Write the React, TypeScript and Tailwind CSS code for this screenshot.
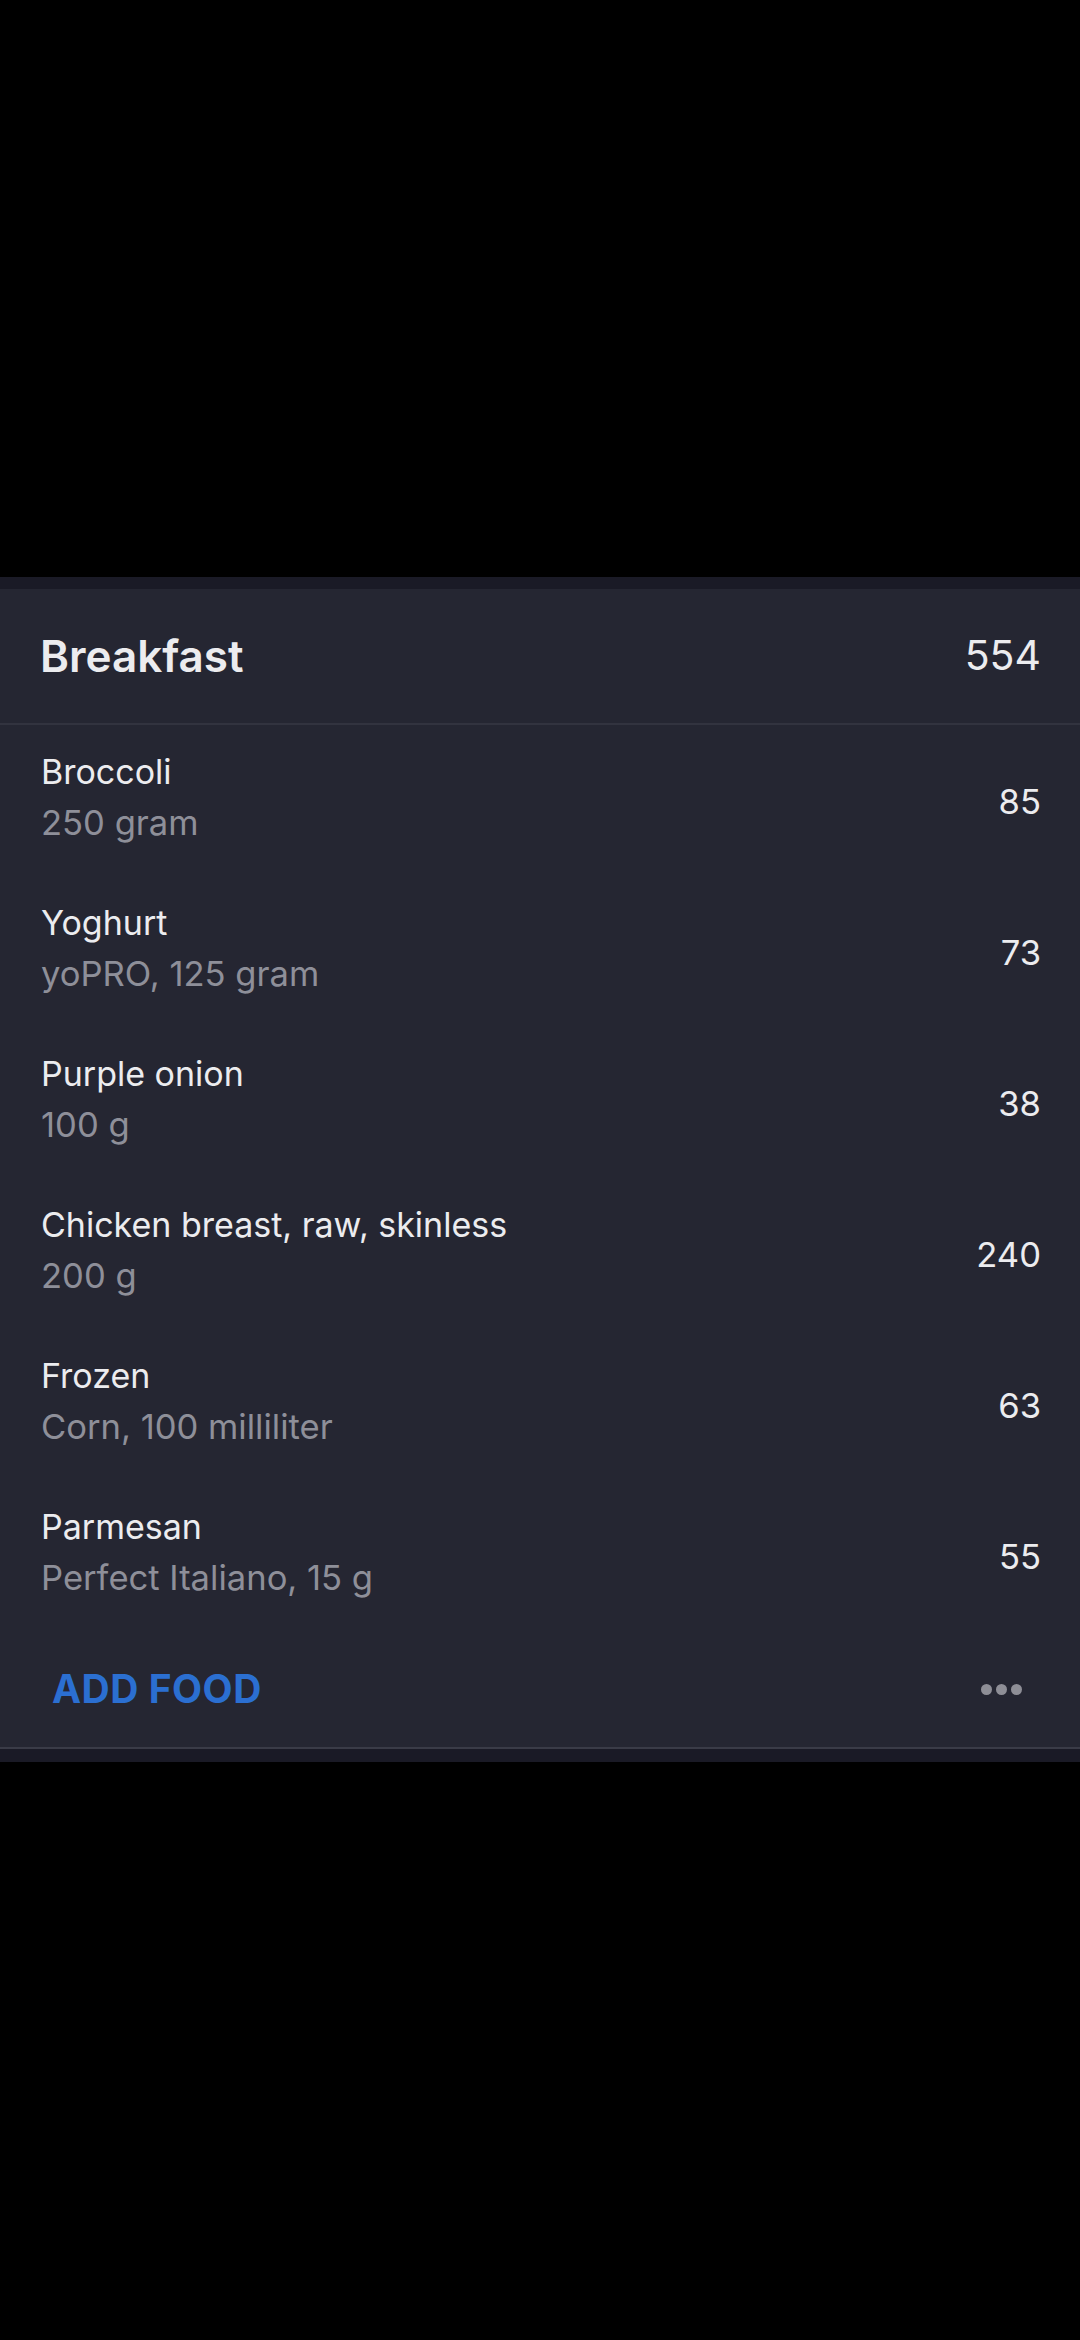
import React from "react";

type Item = { name: string; detail: string; kcal: number };

const items: Item[] = [
  { name: "Broccoli", detail: "250 gram", kcal: 85 },
  { name: "Yoghurt", detail: "yoPRO, 125 gram", kcal: 73 },
  { name: "Purple onion", detail: "100 g", kcal: 38 },
  { name: "Chicken breast, raw, skinless", detail: "200 g", kcal: 240 },
  { name: "Frozen", detail: "Corn, 100 milliliter", kcal: 63 },
  { name: "Parmesan", detail: "Perfect Italiano, 15 g", kcal: 55 },
];

function FoodRow({ item }: { item: Item }) {
  return (
    <div className="flex items-center justify-between pl-[41px] pr-[39px] pt-[22px] pb-[29px]">
      <div className="flex flex-col">
        <span className="text-[34px] leading-[50px] text-[#ececef]">{item.name}</span>
        <span className="text-[34.6px] leading-[50px] text-[#8e8f99]">{item.detail}</span>
      </div>
      <span className="mt-[8px] text-[34.6px] leading-[50px] text-[#ececef]">{item.kcal}</span>
    </div>
  );
}

export default function App() {
  const total = items.reduce((s, i) => s + i.kcal, 0);
  return (
    <div
      className="min-h-[2340px] w-[1080px] bg-black"
      style={{ fontFamily: "Inter, 'Noto Sans', sans-serif" }}
    >
      <div className="h-[577px]" />
      <div className="bg-[#1a1a26] pt-[12px] pb-[13px]">
        <div className="bg-[#252632] border-b-2 border-[#3a3b47]">
          <div className="flex h-[136px] items-center justify-between border-b-2 border-[#32333f] pl-[40px] pr-[39px]">
            <h2 className="text-[44px] font-semibold text-[#ececef]">Breakfast</h2>
            <span className="text-[41px] text-[#ececef]">{total}</span>
          </div>
          <div className="flex flex-col">
            {items.map((it) => (
              <FoodRow key={it.name} item={it} />
            ))}
          </div>
          <div className="flex h-[116px] items-center justify-between pl-[52px] pr-[58px]">
            <button className="text-[39px] font-bold tracking-[0.5px] text-[#2b6fd1]">ADD FOOD</button>
            <div className="flex gap-[4px]">
              <span className="h-[11px] w-[11px] rounded-full bg-[#8e8e96]" />
              <span className="h-[11px] w-[11px] rounded-full bg-[#8e8e96]" />
              <span className="h-[11px] w-[11px] rounded-full bg-[#8e8e96]" />
            </div>
          </div>
        </div>
      </div>
    </div>
  );
}
